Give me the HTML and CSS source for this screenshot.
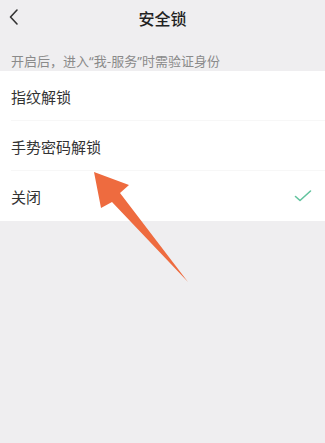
FILE: index.html
```html
<!DOCTYPE html>
<html>
<head>
<meta charset="utf-8">
<link rel="stylesheet" href="styles.css">
</head>
<body>
<div class="page">
  <div class="header">
    <svg class="back" width="12" height="18" viewBox="0 0 12 18"><path d="M9 2 L2.5 9 L9 16" fill="none" stroke="#333" stroke-width="1.6" stroke-linecap="round" stroke-linejoin="round"/></svg>
    <div class="title">安全锁</div>
  </div>
  <div class="hint">开启后，进入<span class="q">“</span>我-服务<span class="q">”</span>时需验证身份</div>
  <div class="list">
    <div class="row">指纹解锁</div>
    <div class="row">手势密码解锁</div>
    <div class="row last"><span>关闭</span>
      <svg class="check" width="18" height="14" viewBox="0 0 18 14"><path d="M1.5 7.5 L6 11.5 L16.5 2" fill="none" stroke="#62c39e" stroke-width="1.6" stroke-linecap="round" stroke-linejoin="round"/></svg>
    </div>
  </div>
  <svg class="arrow" width="325" height="443" viewBox="0 0 325 443"><polygon points="94,172 129,185 120,193 188,282 112,202 101,208" fill="#ee6b3f"/></svg>
</div>
</body>
</html>
```
FILE: styles.css
```css
html, body { margin: 0; padding: 0; }
body {
  background: #efeef0;
  font-family: "Noto Sans CJK SC", "Noto Sans", sans-serif;
  width: 325px;
  height: 443px;
  overflow: hidden;
}
.page { position: relative; width: 325px; height: 443px; }
.header {
  height: 36px;
  display: flex;
  align-items: center;
  justify-content: center;
  position: relative;
}
.back { position: absolute; left: 8px; top: 8px; }
.title { font-size: 16px; color: #222; font-weight: 500; }
.hint {
  height: 35px;
  padding: 0 11px 2px;
  display: flex;
  align-items: flex-end;
  box-sizing: border-box;
  font-size: 13px;
  color: #8a8a8a;
  line-height: 16px;
}
.q { font-family: "Noto Sans", sans-serif; }
.list { background: #fff; }
.row {
  height: 50px;
  display: flex;
  align-items: center;
  justify-content: space-between;
  padding: 0 11px;
  font-size: 15px;
  color: #333;
  position: relative;
}
.row::after {
  content: "";
  position: absolute;
  left: 11px; right: 0; bottom: 0;
  height: 1px;
  background: #f7f7f7;
}
.row.last::after { display: none; }
.check { margin-right: 2px; }
.arrow { position: absolute; left: 0; top: 0; pointer-events: none; }
```
